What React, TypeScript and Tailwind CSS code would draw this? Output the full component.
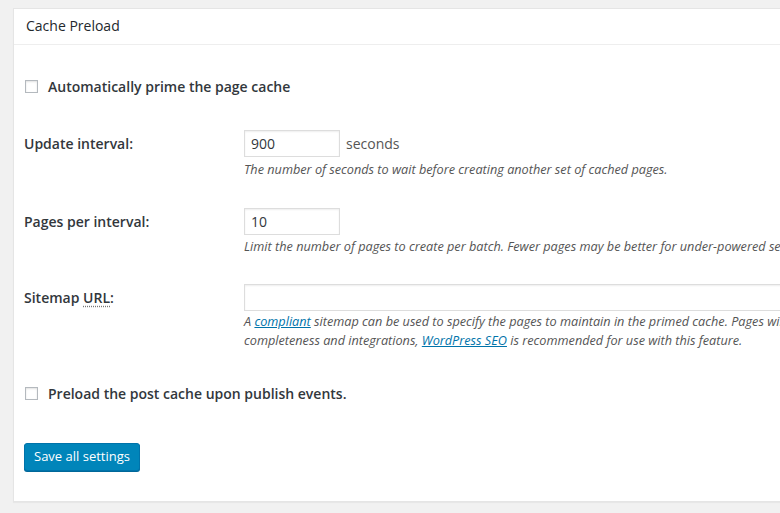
import type { ReactNode } from "react";

const font = { fontFamily: '"Open Sans", "Liberation Sans", sans-serif' };

function Checkbox() {
  return (
    <input
      type="checkbox"
      className="m-0 h-[13px] w-[13px] shrink-0 appearance-none border border-[#b4b9be] bg-white shadow-[inset_0_1px_2px_rgba(0,0,0,0.12)]"
    />
  );
}

function CheckRow({ label, className }: { label: string; className?: string }) {
  return (
    <label className={`flex h-[20px] items-center gap-[10px] pl-[1px] ${className ?? ""}`}>
      <Checkbox />
      <span className="text-[14px] font-semibold text-[#32373c]">{label}</span>
    </label>
  );
}

function FieldRow({
  label,
  children,
  className,
}: {
  label: ReactNode;
  children: ReactNode;
  className?: string;
}) {
  return (
    <div className={`flex ${className ?? ""}`}>
      <div className="flex h-[27px] w-[220px] shrink-0 items-center text-[14px] font-semibold text-[#32373c]">
        {label}
      </div>
      <div className="flex flex-col">{children}</div>
    </div>
  );
}

const inputCls =
  "h-[27px] border border-[#ddd] bg-white px-[6px] text-[14px] text-[#32373c] shadow-[inset_0_1px_2px_rgba(0,0,0,0.07)] outline-none";

const descCls = "whitespace-nowrap text-[12.7px] italic text-[#555]";

export default function App() {
  return (
    <div style={font} className="h-[513px] overflow-hidden bg-[#f1f1f1] pl-[13px] pt-[8px]">
      <div className="w-[1000px] border border-[#e5e5e5] bg-white shadow-[0_1px_1px_rgba(0,0,0,0.04)]">
        <div className="flex h-[36px] items-center border-b border-[#eee] px-[12px] pb-[2px] text-[14px] text-[#23282d]">
          Cache Preload
        </div>

        <div className="px-[10px] pb-[30px] pt-[31px]">
          <CheckRow label="Automatically prime the page cache" />

          <FieldRow label="Update interval:" className="mt-[34px]">
            <div className="flex items-center gap-[6px]">
              <input className={`${inputCls} w-[96px]`} defaultValue="900" />
              <span className="text-[14px] text-[#555]">seconds</span>
            </div>
            <p className={`${descCls} mt-[2px] leading-[20px]`}>
              The number of seconds to wait before creating another set of cached pages.
            </p>
          </FieldRow>

          <FieldRow label="Pages per interval:" className="mt-[29px]">
            <input className={`${inputCls} w-[96px]`} defaultValue="10" />
            <p className={`${descCls} mt-[1px] leading-[20px]`}>
              Limit the number of pages to create per batch. Fewer pages may be better for
              under-powered servers.
            </p>
          </FieldRow>

          <FieldRow
            label={
              <span>
                Sitemap{" "}
                <abbr
                  title="Uniform Resource Locator"
                  className="underline decoration-dotted decoration-[#777] underline-offset-[3px]"
                >
                  URL
                </abbr>
                :
              </span>
            }
            className="mt-[28px]"
          >
            <input className={`${inputCls} w-[640px]`} />
            <p className={`${descCls} mt-[1px] leading-[19px]`}>
              A{" "}
              <a href="#" className="text-[#0073aa] underline">
                compliant
              </a>{" "}
              sitemap can be used to specify the pages to maintain in the primed cache. Pages will
              be cached according to the priorities specified in the XML file. Due to its
              <br />
              completeness and integrations,{" "}
              <a href="#" className="text-[#0073aa] underline">
                WordPress SEO
              </a>{" "}
              is recommended for use with this feature.
            </p>
          </FieldRow>

          <CheckRow label="Preload the post cache upon publish events." className="mt-[33px]" />

          <button className="mt-[40px] h-[28px] rounded-[3px] border border-[#0073aa] bg-[#0085ba] px-[9px] text-[13px] text-white shadow-[0_1px_0_#006799]">
            Save all settings
          </button>
        </div>
      </div>
    </div>
  );
}
